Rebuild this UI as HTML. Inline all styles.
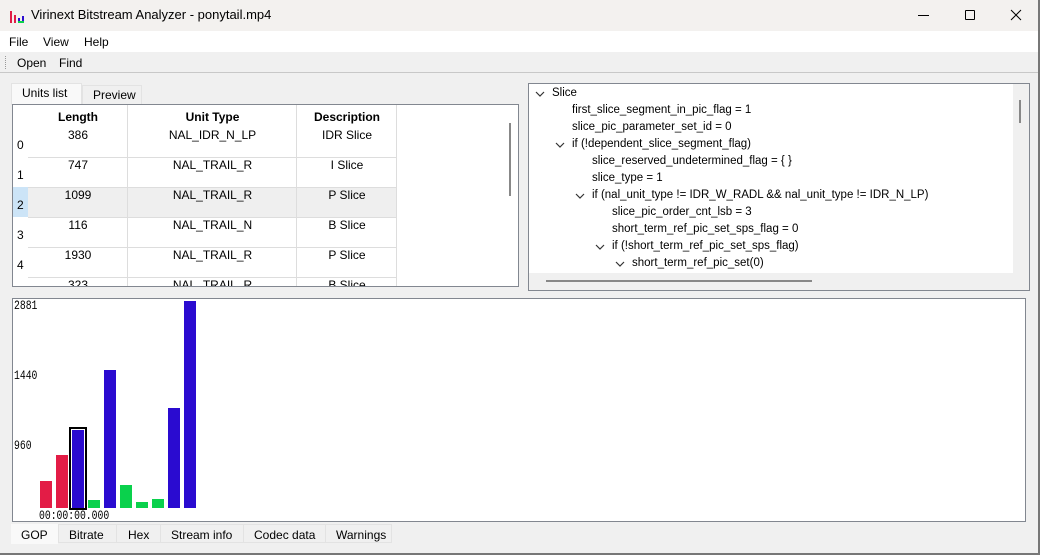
<!DOCTYPE html>
<html><head><meta charset="utf-8"><style>
*{margin:0;padding:0;box-sizing:border-box}
body{width:1040px;height:555px;overflow:hidden;background:#f0f0f0;font-family:"Liberation Sans",sans-serif;font-size:12px;color:#000;position:relative}
.a{position:absolute;white-space:nowrap}
.c{text-align:center}
.m{font-family:"Liberation Mono",monospace;font-size:13px;transform:scaleX(0.75);transform-origin:left top}
</style></head><body>
<div class="a" style="left:0;top:0;width:1040px;height:31px;background:#f3f1ef"></div>
<svg class="a" style="left:10px;top:11px" width="15" height="12"><rect x="0" y="0" width="2" height="12" fill="#e01d46"/><rect x="4" y="4" width="2" height="8" fill="#e01d46"/><rect x="8" y="7" width="2" height="5" fill="#2d0fd0"/><rect x="12" y="5" width="2" height="7" fill="#2d0fd0"/><rect x="8" y="10" width="6" height="2" fill="#0ad14c"/></svg>
<div class="a" style="left:31px;top:7px;font-size:13px">Virinext Bitstream Analyzer - ponytail.mp4</div>
<div class="a" style="left:918px;top:15px;width:11px;height:1px;background:#000"></div>
<div class="a" style="left:965px;top:10px;width:10px;height:10px;border:1px solid #000;border-radius:1px"></div>
<svg class="a" style="left:1010px;top:9px" width="12" height="12"><path d="M1 1L11 11M11 1L1 11" stroke="#000" stroke-width="1"/></svg>
<div class="a" style="left:0;top:31px;width:1040px;height:21px;background:#fff"></div>
<div class="a" style="left:9px;top:35px">File</div>
<div class="a" style="left:43px;top:35px">View</div>
<div class="a" style="left:84px;top:35px">Help</div>
<div class="a" style="left:0;top:72px;width:1040px;height:1px;background:#c8c8c8"></div>
<div class="a" style="left:5px;top:56px;width:1px;height:13px;border-left:1px dotted #999"></div>
<div class="a" style="left:17px;top:56px">Open</div>
<div class="a" style="left:59px;top:56px">Find</div>
<!-- tabs -->
<div class="a" style="left:11px;top:83px;width:71px;height:22px;background:#f9f9f9;border:1px solid #e3e3e3;border-bottom:none"></div>
<div class="a" style="left:22px;top:86px">Units list</div>
<div class="a" style="left:82px;top:85px;width:60px;height:19px;background:#f0f0f0;border:1px solid #e3e3e3;border-bottom:none"></div>
<div class="a" style="left:93px;top:88px">Preview</div>
<!-- table -->
<div class="a" style="left:12px;top:104px;width:507px;height:183px;background:#fff;border:1px solid #828790;overflow:hidden">
 <div class="a" style="left:15px;top:82px;width:369px;height:30px;background:#efefef"></div>
 <div class="a" style="left:0;top:82px;width:15px;height:30px;background:#cce4f7"></div>
 <div class="a" style="left:15px;top:0;width:369px;height:181px">
  <div class="a" style="left:0;top:0;width:100px;height:181px;border-right:1px solid #ddd"></div>
  <div class="a" style="left:100px;top:0;width:169px;height:181px;border-right:1px solid #ddd"></div>
  <div class="a" style="left:269px;top:0;width:100px;height:181px;border-right:1px solid #ddd"></div>
 </div>
 <div class="a" style="left:15px;top:52px;width:369px;height:1px;background:#ddd"></div>
 <div class="a" style="left:15px;top:82px;width:369px;height:1px;background:#ddd"></div>
 <div class="a" style="left:15px;top:112px;width:369px;height:1px;background:#ddd"></div>
 <div class="a" style="left:15px;top:142px;width:369px;height:1px;background:#ddd"></div>
 <div class="a" style="left:15px;top:172px;width:369px;height:1px;background:#ddd"></div>
 <div class="a c" style="left:15px;top:5px;width:100px;font-weight:bold">Length</div>
 <div class="a c" style="left:115px;top:5px;width:169px;font-weight:bold">Unit Type</div>
 <div class="a c" style="left:284px;top:5px;width:100px;font-weight:bold">Description</div>

 <div class="a c" style="left:15px;top:23px;width:100px">386</div>
 <div class="a c" style="left:115px;top:23px;width:169px">NAL_IDR_N_LP</div>
 <div class="a c" style="left:284px;top:23px;width:100px">IDR Slice</div>
 <div class="a c" style="left:15px;top:53px;width:100px">747</div>
 <div class="a c" style="left:115px;top:53px;width:169px">NAL_TRAIL_R</div>
 <div class="a c" style="left:284px;top:53px;width:100px">I Slice</div>
 <div class="a c" style="left:15px;top:83px;width:100px">1099</div>
 <div class="a c" style="left:115px;top:83px;width:169px">NAL_TRAIL_R</div>
 <div class="a c" style="left:284px;top:83px;width:100px">P Slice</div>
 <div class="a c" style="left:15px;top:113px;width:100px">116</div>
 <div class="a c" style="left:115px;top:113px;width:169px">NAL_TRAIL_N</div>
 <div class="a c" style="left:284px;top:113px;width:100px">B Slice</div>
 <div class="a c" style="left:15px;top:143px;width:100px">1930</div>
 <div class="a c" style="left:115px;top:143px;width:169px">NAL_TRAIL_R</div>
 <div class="a c" style="left:284px;top:143px;width:100px">P Slice</div>
 <div class="a c" style="left:15px;top:173px;width:100px">323</div>
 <div class="a c" style="left:115px;top:173px;width:169px">NAL_TRAIL_R</div>
 <div class="a c" style="left:284px;top:173px;width:100px">B Slice</div>

 <div class="a" style="left:4px;top:33px">0</div>
 <div class="a" style="left:4px;top:63px">1</div>
 <div class="a" style="left:4px;top:93px">2</div>
 <div class="a" style="left:4px;top:123px">3</div>
 <div class="a" style="left:4px;top:153px">4</div>
 <div class="a" style="left:496px;top:18px;width:2px;height:73px;background:#888"></div>
</div>
<!-- tree -->
<div class="a" style="left:528px;top:83px;width:502px;height:208px;background:#f0f0f0;border:1px solid #828790"></div>
<div class="a" style="left:529px;top:84px;width:484px;height:189px;background:#fff"></div>
<div class="a" style="left:529px;top:86px;font-size:11.5px">
 <svg class="a" style="left:6px;top:5px" width="10" height="6"><path d="M1 1L5 5L9 1" fill="none" stroke="#333" stroke-width="1.2"/></svg>
 <div class="a" style="left:23px;top:1px">Slice</div>
 <div class="a" style="left:43px;top:18px">first_slice_segment_in_pic_flag = 1</div>
 <div class="a" style="left:43px;top:35px">slice_pic_parameter_set_id = 0</div>
 <svg class="a" style="left:26px;top:56px" width="10" height="6"><path d="M1 1L5 5L9 1" fill="none" stroke="#333" stroke-width="1.2"/></svg>
 <div class="a" style="left:43px;top:52px">if (!dependent_slice_segment_flag)</div>
 <div class="a" style="left:63px;top:69px">slice_reserved_undetermined_flag = { }</div>
 <div class="a" style="left:63px;top:86px">slice_type = 1</div>
 <svg class="a" style="left:46px;top:107px" width="10" height="6"><path d="M1 1L5 5L9 1" fill="none" stroke="#333" stroke-width="1.2"/></svg>
 <div class="a" style="left:63px;top:103px">if (nal_unit_type != IDR_W_RADL &amp;&amp; nal_unit_type != IDR_N_LP)</div>
 <div class="a" style="left:83px;top:120px">slice_pic_order_cnt_lsb = 3</div>
 <div class="a" style="left:83px;top:137px">short_term_ref_pic_set_sps_flag = 0</div>
 <svg class="a" style="left:66px;top:158px" width="10" height="6"><path d="M1 1L5 5L9 1" fill="none" stroke="#333" stroke-width="1.2"/></svg>
 <div class="a" style="left:83px;top:154px">if (!short_term_ref_pic_set_sps_flag)</div>
 <svg class="a" style="left:86px;top:175px" width="10" height="6"><path d="M1 1L5 5L9 1" fill="none" stroke="#333" stroke-width="1.2"/></svg>
 <div class="a" style="left:103px;top:171px">short_term_ref_pic_set(0)</div>
</div>
<div class="a" style="left:1019px;top:100px;width:2px;height:23px;background:#888"></div>
<div class="a" style="left:546px;top:280px;width:266px;height:2px;background:#888"></div>
<!-- chart -->
<div class="a" style="left:12px;top:298px;width:1014px;height:224px;background:#fff;border:1px solid #828790"></div>
<div class="a m" style="left:14px;top:298px">2881</div>
<div class="a m" style="left:14px;top:368px">1440</div>
<div class="a m" style="left:14px;top:438px">960</div>
<div class="a" style="left:40px;top:481px;width:12px;height:27px;background:#e31c46"></div>
<div class="a" style="left:56px;top:455px;width:12px;height:53px;background:#e31c46"></div>
<div class="a" style="left:69px;top:427px;width:18px;height:83px;border:2px solid #000"></div>
<div class="a" style="left:72px;top:430px;width:12px;height:78px;background:#2a0bd0"></div>
<div class="a" style="left:88px;top:500px;width:12px;height:8px;background:#0ad14c"></div>
<div class="a" style="left:104px;top:370px;width:12px;height:138px;background:#2a0bd0"></div>
<div class="a" style="left:120px;top:485px;width:12px;height:23px;background:#0ad14c"></div>
<div class="a" style="left:136px;top:502px;width:12px;height:6px;background:#0ad14c"></div>
<div class="a" style="left:152px;top:499px;width:12px;height:9px;background:#0ad14c"></div>
<div class="a" style="left:168px;top:408px;width:12px;height:100px;background:#2a0bd0"></div>
<div class="a" style="left:184px;top:301px;width:12px;height:207px;background:#2a0bd0"></div>
<div class="a m" style="left:39px;top:508px">00:00:00.000</div>
<!-- bottom tabs -->
<div class="a" style="left:11px;top:524px;width:47px;height:20px;background:#f9f9f9"></div>
<div class="a" style="left:58px;top:524px;width:334px;height:19px;background:#f0f0f0;border:1px solid #e3e3e3"></div>
<div class="a" style="left:116px;top:524px;width:1px;height:19px;background:#e3e3e3"></div>
<div class="a" style="left:160px;top:524px;width:1px;height:19px;background:#e3e3e3"></div>
<div class="a" style="left:243px;top:524px;width:1px;height:19px;background:#e3e3e3"></div>
<div class="a" style="left:325px;top:524px;width:1px;height:19px;background:#e3e3e3"></div>
<div class="a" style="left:21px;top:528px">GOP</div>
<div class="a" style="left:69px;top:528px">Bitrate</div>
<div class="a" style="left:128px;top:528px">Hex</div>
<div class="a" style="left:171px;top:528px">Stream info</div>
<div class="a" style="left:254px;top:528px">Codec data</div>
<div class="a" style="left:336px;top:528px">Warnings</div>
<div class="a" style="left:1038px;top:0;width:2px;height:555px;background:#777"></div>
<div class="a" style="left:0;top:553px;width:1040px;height:2px;background:#777"></div>
</body></html>
